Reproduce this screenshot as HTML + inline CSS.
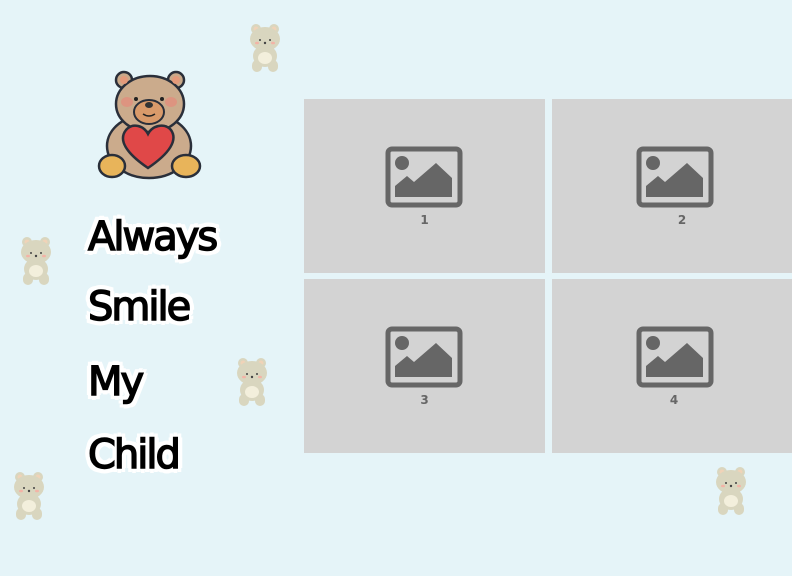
<!DOCTYPE html>
<html><head><meta charset="utf-8"><style>
html,body{margin:0;padding:0;}
body{width:792px;height:576px;background:#e5f4f8;position:relative;overflow:hidden;font-family:"Liberation Sans",sans-serif;}
.box{position:absolute;background:#d3d3d3;width:241px;height:174px;}
.box svg{position:absolute;left:81px;top:47px;}
.box span{position:absolute;left:0;width:100%;text-align:center;top:114px;font-family:"DejaVu Sans",sans-serif;font-weight:bold;font-size:12px;color:#666;}
.sb{position:absolute;width:32px;height:50px;}
.txt{position:absolute;left:88px;font-family:"DejaVu Sans",sans-serif;font-size:40px;color:#000;letter-spacing:-2px;-webkit-text-stroke:1.5px #000;
text-shadow:3px 0 0 #fff,-3px 0 0 #fff,0 3px 0 #fff,0 -3px 0 #fff,2px 2px 0 #fff,-2px -2px 0 #fff,2px -2px 0 #fff,-2px 2px 0 #fff,5px 0 0 #fff,-5px 0 0 #fff,0 5px 0 #fff,0 -5px 0 #fff,4px 4px 0 #fff,-4px -4px 0 #fff,4px -4px 0 #fff,-4px 4px 0 #fff;}
</style></head><body>
<svg width="0" height="0" style="position:absolute"><defs>
<g id="bear">
<circle cx="7" cy="6" r="5" fill="#d9d6bf"/><circle cx="25" cy="6" r="5" fill="#d9d6bf"/>
<circle cx="7" cy="6" r="2.5" fill="#f0d3b8"/><circle cx="25" cy="6" r="2.5" fill="#f0d3b8"/>
<rect x="3" y="37" width="10" height="12" rx="5" fill="#d9d6bf"/><rect x="19" y="37" width="10" height="12" rx="5" fill="#d9d6bf"/>
<ellipse cx="16" cy="33" rx="12" ry="11" fill="#d9d6bf"/>
<ellipse cx="16" cy="16" rx="15" ry="12" fill="#d9d6bf"/>
<ellipse cx="16" cy="35" rx="7" ry="6" fill="#f3efdc"/>
<circle cx="11" cy="17" r="1" fill="#444"/><circle cx="21" cy="17" r="1" fill="#444"/>
<circle cx="16" cy="20" r="1.2" fill="#444"/>
<ellipse cx="8" cy="20" rx="2" ry="1.3" fill="#f3b3a6"/><ellipse cx="24" cy="20" rx="2" ry="1.3" fill="#f3b3a6"/>
</g>
<g id="img">
<rect x="3" y="3" width="72" height="56" rx="4" fill="none" stroke="#666" stroke-width="5"/>
<circle cx="17" cy="17" r="7" fill="#666"/>
<path d="M10 51 L10 40 L22 30 L29 36 L51 17 L67 32 L67 51 Z" fill="#666"/>
</g>
</defs></svg>

<svg class="sb" style="left:249px;top:23px" viewBox="0 0 32 50"><use href="#bear"/></svg>
<svg class="sb" style="left:20px;top:236px" viewBox="0 0 32 50"><use href="#bear"/></svg>
<svg class="sb" style="left:236px;top:357px" viewBox="0 0 32 50"><use href="#bear"/></svg>
<svg class="sb" style="left:13px;top:471px" viewBox="0 0 32 50"><use href="#bear"/></svg>
<svg class="sb" style="left:715px;top:466px" viewBox="0 0 32 50"><use href="#bear"/></svg>

<svg style="position:absolute;left:96px;top:68px" width="106" height="118" viewBox="0 0 106 118">
<g stroke="#2a2f3a" stroke-width="2.5">
<circle cx="28" cy="12" r="8" fill="#c9a98a"/><circle cx="80" cy="12" r="8" fill="#c9a98a"/>
<ellipse cx="53" cy="78" rx="42" ry="32" fill="#cbab8c"/>
<ellipse cx="54" cy="36" rx="34" ry="28" fill="#cbab8c"/>
<ellipse cx="16" cy="98" rx="13" ry="11" fill="#e8b45a"/><ellipse cx="90" cy="98" rx="14" ry="11" fill="#e8b45a"/>
</g>
<circle cx="28" cy="12" r="4" fill="#e49a7a"/><circle cx="80" cy="12" r="4" fill="#e49a7a"/>
<ellipse cx="53" cy="44" rx="15" ry="12" fill="#d99a6a" stroke="#2a2f3a" stroke-width="2"/>
<ellipse cx="31" cy="34" rx="6" ry="5" fill="#e48a7a" opacity=".7"/><ellipse cx="75" cy="34" rx="6" ry="5" fill="#e48a7a" opacity=".7"/>
<circle cx="40" cy="31" r="2" fill="#222"/><circle cx="66" cy="31" r="2" fill="#222"/>
<ellipse cx="53" cy="37" rx="4" ry="3" fill="#333"/>
<path d="M47 46 Q53 50 59 46" stroke="#222" stroke-width="1.5" fill="none"/>
<path d="M52 100 C30 85 22 72 30 62 C37 54 48 58 52 66 C56 58 68 54 75 62 C82 72 74 85 52 100 Z" fill="#e04848" stroke="#2a2f3a" stroke-width="2.5"/>
</svg>

<div class="txt" style="top:214px">Always</div>
<div class="txt" style="top:284px">Smile</div>
<div class="txt" style="top:359px">My</div>
<div class="txt" style="top:432px">Child</div>

<div class="box" style="left:304px;top:99px"><svg width="78" height="62" viewBox="0 0 78 62"><use href="#img"/></svg><span>1</span></div>
<div class="box" style="left:552px;top:99px;width:240px"><svg width="78" height="62" viewBox="0 0 78 62" style="left:84px"><use href="#img"/></svg><span style="left:10px">2</span></div>
<div class="box" style="left:304px;top:279px"><svg width="78" height="62" viewBox="0 0 78 62"><use href="#img"/></svg><span>3</span></div>
<div class="box" style="left:552px;top:279px;width:240px"><svg width="78" height="62" viewBox="0 0 78 62" style="left:84px"><use href="#img"/></svg><span style="left:2px">4</span></div>
</body></html>
